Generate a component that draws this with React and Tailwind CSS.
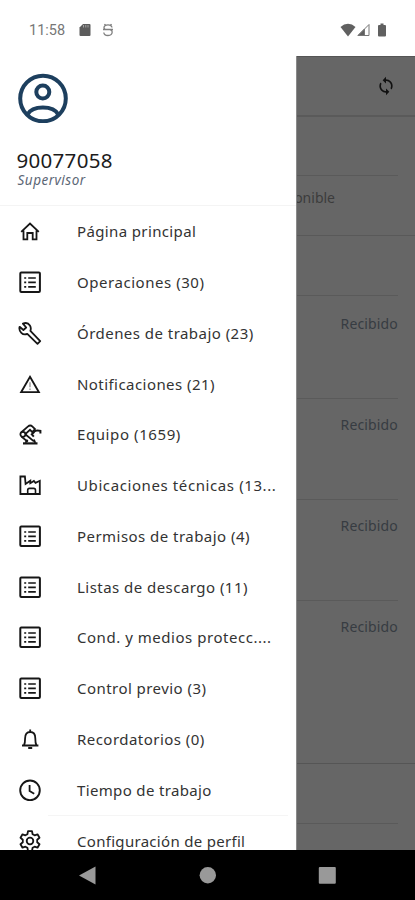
import React from 'react';
import { MdSync } from 'react-icons/md';

const Icon = ({ children }) => (
  <svg
    viewBox="0 0 24 24"
    className="w-6 h-6 shrink-0"
    fill="none"
    stroke="#161616"
    strokeWidth="1.8"
  >
    {children}
  </svg>
);

const HomeIcon = () => (
  <Icon>
    <path d="M3.2 12.8L12 4.6l8.8 8.2M5.5 11.500v8.900h3.800v-6.400h5.400v6.400h3.800v-8.900" />
  </Icon>
);

const ListIcon = () => (
  <Icon>
    <rect x="2.3" y="2.5" width="19.6" height="19.6" rx="1" strokeWidth="2" />
    <path d="M6.2 8h2M10.2 8h7.6M6.2 12.4h2M10.2 12.4h7.6M6.2 16.8h2M10.2 16.8h7.6" strokeWidth="1.7" />
  </Icon>
);

const WrenchIcon = () => (
  <Icon>
    <path
      d="M1.6 5.8l3.8 3.2 2.8-2.5L4.900 2.700c2.600-1.100 5.600-.4 7 1.700 1.100 1.700 1.100 3.700.5 5.500l9.800 10.200-2.700 2.700L9.300 12.900c-2 .8-4.400.5-6-1.100-1.700-1.700-2.300-3.800-1.700-6z"
      strokeLinejoin="round"
    />
  </Icon>
);

const WarningIcon = () => (
  <Icon>
    <path d="M12 4.7L20.900 20.200H3.100z" />
    <path d="M12 10.200v5M12 16.400v1.600" strokeWidth="1.2" stroke="#888" />
  </Icon>
);

const RobotIcon = () => (
  <Icon>
    <path d="M5 21.400h14.500" strokeWidth="2.2" />
    <path d="M7.400 20.800l2.200-3M17.300 20.800l-1.400-3.300" />
    <path d="M3.400 10.200l6.400-5.600c1.700-1.500 3.200-1.500 4.700 0l2.500 2.500-2.700 3-2.300-2.300-4.700 4.400" />
    <path d="M7.300 12.200l8.600 7.200M3.400 14.600l6.400 5.200" />
    <circle cx="4.900" cy="12.300" r="2.500" />
    <path d="M16.200 9.200l3.200-.8 3 .4v2.700M16.600 9.600l-2.800 2.800 2 2.200" strokeWidth="2" />
  </Icon>
);

const FactoryIcon = () => (
  <Icon>
    <path d="M2.400 21V3.500h4.500l.7 7.500 4.700-3.200v2.400l3.600-2.200 1.600 1.800 4.300-2V21z" />
    <path d="M9.700 20.800v-3.600q0-1.800 1.800-1.800h4.200q1.800 0 1.800 1.800v3.600" strokeWidth="1.6" />
  </Icon>
);

const BellIcon = () => (
  <Icon>
    <path d="M4 18.500h16.400M6 18.200c.9-1.600 1.100-3.500 1.100-6.900 0-4 1.700-6.300 5.100-6.300s5.100 2.300 5.100 6.300c0 3.400.2 5.300 1.100 6.900M12.200 5V2.500" />
    <path d="M10.200 21h4" strokeWidth="2" />
  </Icon>
);

const ClockIcon = () => (
  <Icon>
    <circle cx="12" cy="12.300" r="9.8" strokeWidth="1.9" />
    <path d="M11.600 7v6l4.600 2.800" />
  </Icon>
);

const GearIcon = () => (
  <Icon>
    <path
      d="M10 2.200h4l.6 3 2 1.100 2.900-1 2 3.500-2.300 2v2.400l2.300 2-2 3.500-2.900-1-2 1.100-.6 3h-4l-.6-3-2-1.100-2.900 1-2-3.500 2.300-2v-2.400l-2.300-2 2-3.500 2.900 1 2-1.100z"
      strokeLinejoin="round"
    />
    <circle cx="12" cy="12" r="3.3" />
  </Icon>
);

const menuItems = [
  { label: 'Página principal', icon: HomeIcon, tracking: 'tracking-[0.37px]' },
  { label: 'Operaciones (30)', icon: ListIcon, tracking: 'tracking-[0.54px]' },
  { label: 'Órdenes de trabajo (23)', icon: WrenchIcon, tracking: 'tracking-[0.46px]' },
  { label: 'Notificaciones (21)', icon: WarningIcon, tracking: 'tracking-[0.44px]' },
  { label: 'Equipo (1659)', icon: RobotIcon, tracking: 'tracking-[0.59px]' },
  { label: 'Ubicaciones técnicas (13...', icon: FactoryIcon, tracking: 'tracking-[0.6px]' },
  { label: 'Permisos de trabajo (4)', icon: ListIcon, tracking: 'tracking-[0.46px]' },
  { label: 'Listas de descargo (11)', icon: ListIcon, tracking: 'tracking-[0.46px]' },
  { label: 'Cond. y medios protecc....', icon: ListIcon, tracking: 'tracking-[0.53px]' },
  { label: 'Control previo (3)', icon: ListIcon, tracking: 'tracking-[0.45px]' },
  { label: 'Recordatorios (0)', icon: BellIcon, tracking: 'tracking-[0.46px]' },
  { label: 'Tiempo de trabajo', icon: ClockIcon, tracking: 'tracking-[0.35px]' },
];

const MenuItem = ({ label, icon: ItemIcon, tracking }) => (
  <li className="h-[50.75px] flex items-center pl-[18px] gap-[35px]">
    <ItemIcon />
    <span className={`text-[15px] leading-5 text-[#333] whitespace-nowrap ${tracking}`}>{label}</span>
  </li>
);

const StatusBar = () => (
  <div className="h-14 flex items-start justify-between pl-[29px] pr-[29px] pt-5 text-[#777]">
    <div className="flex items-center h-5">
      <span className="font-[Roboto] text-[14.5px] leading-5 w-[50px] pt-px">11:58</span>
      <svg viewBox="0 0 12 14" className="w-3 h-3.5" fill="#5c5c5c">
        <path d="M4 1h6.500q1 0 1 1v10q0 1-1 1H1.500q-1 0-1-1V4.500z" />
        <path d="M4.500 2v2.500M6.800 2v2.500M9 2v2.500" stroke="#aaa" strokeWidth=".9" />
      </svg>
      <svg viewBox="0 0 12 14" className="w-3 h-3.5 ml-[11px]" fill="none" stroke="#808080" strokeWidth="1.300">
        <path d="M10 4.500Q9.500 1.800 6 1.800T2 4.200Q2 6.500 4 6.500h7M1 6.500h7q2.200.5 2.200 2.500Q10 12.500 6 12.500T1.800 9.500M2.500 1l1 1.500M9.500 1l-1 1.500" />
      </svg>
    </div>
    <div className="flex items-center h-5">
      <svg viewBox="0 0 16 14" className="w-4 h-3.5" fill="#606060">
        <path d="M8 13.500L.5 4Q4 .8 8 .8t7.500 3.200z" />
      </svg>
      <svg viewBox="0 0 13 14" className="w-[13px] h-3.5 ml-[1px]" fill="none" stroke="#777">
        <path d="M1 12.500L12 1.500v11z" />
        <path d="M1 12.500L7.500 6v6.500z" fill="#606060" />
      </svg>
      <svg viewBox="0 0 8 14" className="w-2 h-3.5 ml-2" fill="#606060">
        <path d="M2.500.5h3V2H7q1 0 1 1v9.500q0 1-1 1H1q-1 0-1-1V3q0-1 1-1h1.500z" />
      </svg>
    </div>
  </div>
);

const Drawer = () => (
  <aside className="w-[296px] shrink-0 bg-white overflow-hidden">
    <div className="h-[148.5px] pl-[17.5px] pt-[17px]">
      <svg viewBox="0 0 50 50" className="w-[50px] h-[50px]" fill="none" stroke="#1d3f5e" strokeWidth="4">
        <circle cx="25" cy="25.500" r="22.800" />
        <circle cx="24.800" cy="19" r="6.500" />
        <path d="M9.500 41.500q3.800-7 15.400-7t15.400 7" />
      </svg>
      <div className="mt-[25px] text-[20.5px] leading-6 tracking-[0.3px] text-[#1c1c1c] -ml-px">90077058</div>
      <div className="text-[13.5px] leading-[17px] tracking-[0.5px] italic text-[#5b6675]">Supervisor</div>
    </div>
    <div className="h-[1.5px] bg-[#f4f4f4]" />
    <ul>
      {menuItems.map((item) => (
        <MenuItem key={item.label} {...item} />
      ))}
    </ul>
    <div className="h-px ml-[48px] mr-2 bg-[#f5f5f5]" />
    <ul>
      <MenuItem label="Configuración de perfil" icon={GearIcon} tracking="tracking-[0.3px]" />
    </ul>
  </aside>
);

const OrderRow = () => (
  <div className="h-[101.2px] mr-[17px] border-b border-[#5a5a5a] pt-[16px] text-right text-[14px] leading-5 tracking-[0.15px] text-[#373c42]">
    Recibido
  </div>
);

// Page dimmed behind the open drawer
const DimmedPage = () => (
  <main className="flex-1 min-w-0 bg-[#666] overflow-hidden border-l border-[#8a8a8a]">
    <div className="h-[61px] border-t border-t-[#555] border-b-2 border-b-[#5a5a5a] flex items-center justify-end pr-[19px]">
      <MdSync className="w-5 h-5 text-[#111]" />
    </div>
    <div className="h-[59px] mr-[17px] border-b border-[#5a5a5a]" />
    <div className="h-[60px] border-b border-[#595959] pt-[12px] flex w-full">
      <div className="w-[38px] flex justify-end overflow-hidden text-[14px] leading-5 text-[#3c3c3c]">
        <span>Disponible</span>
      </div>
    </div>
    <div className="h-[60px] mr-[17px] border-b border-[#5a5a5a]" />
    <div className="h-[103px] mr-[17px] border-b border-[#5a5a5a] pt-[18px] text-right text-[14px] leading-5 tracking-[0.15px] text-[#373c42]">
      Recibido
    </div>
    <OrderRow />
    <OrderRow />
    <div className="h-[163px] pr-[17px] border-b border-[#555] pt-[16px] text-right text-[14px] leading-5 tracking-[0.15px] text-[#373c42]">
      Recibido
    </div>
    <div className="h-[60px] mr-[17px] border-b border-[#5a5a5a]" />
  </main>
);

const NavigationBar = () => (
  <div className="h-[50px] bg-black flex items-center">
    <svg viewBox="0 0 415 50" className="w-full h-full" fill="#999">
      <path d="M79 25.500L95.500 16.500v18z" />
      <circle cx="207.800" cy="25.200" r="8.200" />
      <rect x="318.800" y="17" width="17" height="16.800" rx="1" />
    </svg>
  </div>
);

const App = () => {
  return (
    <div className="w-full h-screen flex flex-col bg-white overflow-hidden font-['Noto_Sans',sans-serif]">
      <StatusBar />
      <div className="flex-1 min-h-0 flex">
        <Drawer />
        <DimmedPage />
      </div>
      <NavigationBar />
    </div>
  );
};

export default App;
